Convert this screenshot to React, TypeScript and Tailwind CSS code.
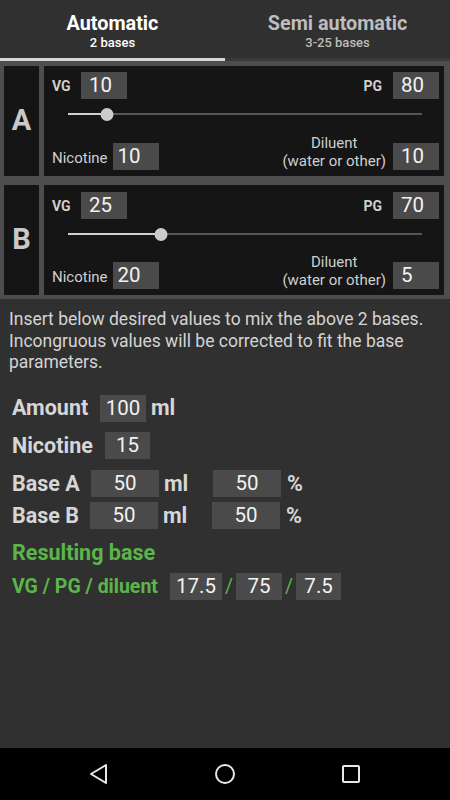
import { useState } from "react";

type BaseRow = {
  letter: string;
  vg: number;
  pg: number;
  nicotine: number;
  diluent: number;
};

const bases: BaseRow[] = [
  { letter: "A", vg: 10, pg: 80, nicotine: 10, diluent: 10 },
  { letter: "B", vg: 25, pg: 70, nicotine: 20, diluent: 5 },
];

function ValueBox({ value, className = "" }: { value: string | number; className?: string }) {
  return (
    <div
      className={`flex h-[27px] items-center bg-[#4a4a4a] text-[20.5px] font-normal leading-none text-[#f2f2f2] ${className}`}
    >
      {value}
    </div>
  );
}

function BaseBlock({ base, first }: { base: BaseRow; first: boolean }) {
  // slider range is vg / (vg + pg)
  const pct = (base.vg / (base.vg + base.pg)) * 100;

  return (
    <div className="flex gap-[5px] bg-[#4d4d4d] pb-[4px] pl-[4px] pr-[6px] pt-[5px]">
      <div className="flex w-[35px] items-center justify-center bg-[#151515] text-[29px] font-bold text-[#c9c9c9]">
        {base.letter}
      </div>
      <div
        className={`flex h-[110px] flex-1 flex-col bg-[#151515] pb-[6px] pl-[8px] pr-[5px] ${
          first ? "pt-[6px]" : "pt-[7px]"
        }`}
      >
        <div className="flex h-[27px] items-center">
          <span className="w-[29px] text-[14px] font-bold leading-none text-[#cfcfcf]">VG</span>
          <ValueBox value={base.vg} className="w-[46px] pl-[8px]" />
          <div className="flex-1" />
          <span className="mr-[11px] text-[14px] font-bold leading-none text-[#cfcfcf]">PG</span>
          <ValueBox value={base.pg} className="w-[46px] pl-[8px]" />
        </div>
        <div className="relative ml-[16px] mr-[17px] mt-[9px] h-[12px]">
          <div className="absolute left-0 right-0 top-[5px] h-[2px] bg-[#555555]" />
          <div className="absolute left-0 top-[5px] h-[2px] bg-[#cfcfcf]" style={{ width: `${pct}%` }} />
          <div
            className="absolute top-0 h-[13px] w-[13px] -translate-x-1/2 rounded-full bg-[#cccccc]"
            style={{ left: `${pct}%` }}
          />
        </div>
        <div className="flex-1" />
        <div className="flex items-end">
          <span className="mb-[4px] mr-[5px] text-[15px] leading-none text-[#cfcfcf]">Nicotine</span>
          <ValueBox value={base.nicotine} className="w-[46px] pl-[5px]" />
          <div className="flex-1" />
          <div className="mr-[7px] flex flex-col items-center text-[15px] leading-[18px] text-[#cfcfcf]">
            <span>Diluent</span>
            <span>(water or other)</span>
          </div>
          <ValueBox value={base.diluent} className="w-[46px] pl-[8px]" />
        </div>
      </div>
    </div>
  );
}

export default function App() {
  const [tab, setTab] = useState(0);

  return (
    <div className="flex h-[800px] w-[450px] flex-col overflow-hidden bg-[#303030] font-['Roboto',sans-serif]">
      <div className="flex h-[61px]">
        {[
          { title: "Automatic", sub: "2 bases" },
          { title: "Semi automatic", sub: "3-25 bases" },
        ].map((item, i) => (
          <button
            key={item.title}
            onClick={() => setTab(i)}
            className={`flex flex-1 flex-col items-center border-b-[3px] pt-[13px] ${
              tab === i ? "border-[#d6d6d6] text-white" : "border-[#3a3a3a] text-[#bdbdbd]"
            }`}
          >
            <span className="text-[19.8px] font-bold leading-[21px]">{item.title}</span>
            <span className="text-[13px] font-medium leading-[17px]">{item.sub}</span>
          </button>
        ))}
      </div>

      {bases.map((b, i) => (
        <BaseBlock key={b.letter} base={b} first={i === 0} />
      ))}

      <p className="px-[9px] pt-[10px] text-[17.5px] leading-[21.5px] text-[#d4d4d4]">
        Insert below desired values to mix the above 2 bases. Incongruous values will be corrected to fit the base
        parameters.
      </p>

      <div className="flex flex-col pl-[12px] text-[21.5px] font-bold leading-none text-[#d6d6d6]">
        <div className="mt-[21px] flex h-[27px] items-center">
          <span className="w-[88px]">Amount</span>
          <ValueBox value={100} className="w-[46px] justify-center" />
          <span className="ml-[5px]">ml</span>
        </div>
        <div className="mt-[11px] flex h-[26px] items-center">
          <span className="w-[93px]">Nicotine</span>
          <ValueBox value={15} className="w-[45px] justify-center" />
        </div>
        <div className="mt-[12px] flex h-[26px] items-center">
          <span className="w-[79px]">Base A</span>
          <ValueBox value={50} className="w-[68px] justify-center" />
          <span className="ml-[5px] w-[49px]">ml</span>
          <ValueBox value={50} className="w-[68px] justify-center" />
          <span className="ml-[6px]">%</span>
        </div>
        <div className="mt-[6px] flex h-[26px] items-center">
          <span className="w-[78px]">Base B</span>
          <ValueBox value={50} className="w-[68px] justify-center" />
          <span className="ml-[5px] w-[49px]">ml</span>
          <ValueBox value={50} className="w-[68px] justify-center" />
          <span className="ml-[6px]">%</span>
        </div>
        <div className="mt-[12px] flex h-[24px] items-center text-[#5cb54a]">Resulting base</div>
        <div className="mt-[9px] flex h-[26px] items-center text-[19.5px] text-[#5cb54a]">
          <span className="w-[158px]">VG / PG / diluent</span>
          <ValueBox value="17.5" className="w-[52px] justify-center text-[#5cb54a]" />
          <span className="mx-[3px] font-normal">/</span>
          <ValueBox value="75" className="w-[46px] justify-center text-[#5cb54a]" />
          <span className="mx-[3px] font-normal">/</span>
          <ValueBox value="7.5" className="w-[45px] justify-center text-[#5cb54a]" />
        </div>
      </div>

      <div className="flex-1" />

      <div className="flex h-[52px] items-center justify-center gap-[104px] bg-black">
        <svg width="22" height="22" viewBox="0 0 22 22" fill="none" stroke="#e8e8e8" strokeWidth="2" strokeLinejoin="round">
          <path d="M18 2 L3 11 L18 20 Z" />
        </svg>
        <svg width="22" height="22" viewBox="0 0 22 22" fill="none" stroke="#e8e8e8" strokeWidth="2">
          <circle cx="11" cy="11" r="9" />
        </svg>
        <svg width="22" height="22" viewBox="0 0 22 22" fill="none" stroke="#e8e8e8" strokeWidth="2">
          <rect x="3" y="3" width="16" height="16" rx="1" />
        </svg>
      </div>
    </div>
  );
}
